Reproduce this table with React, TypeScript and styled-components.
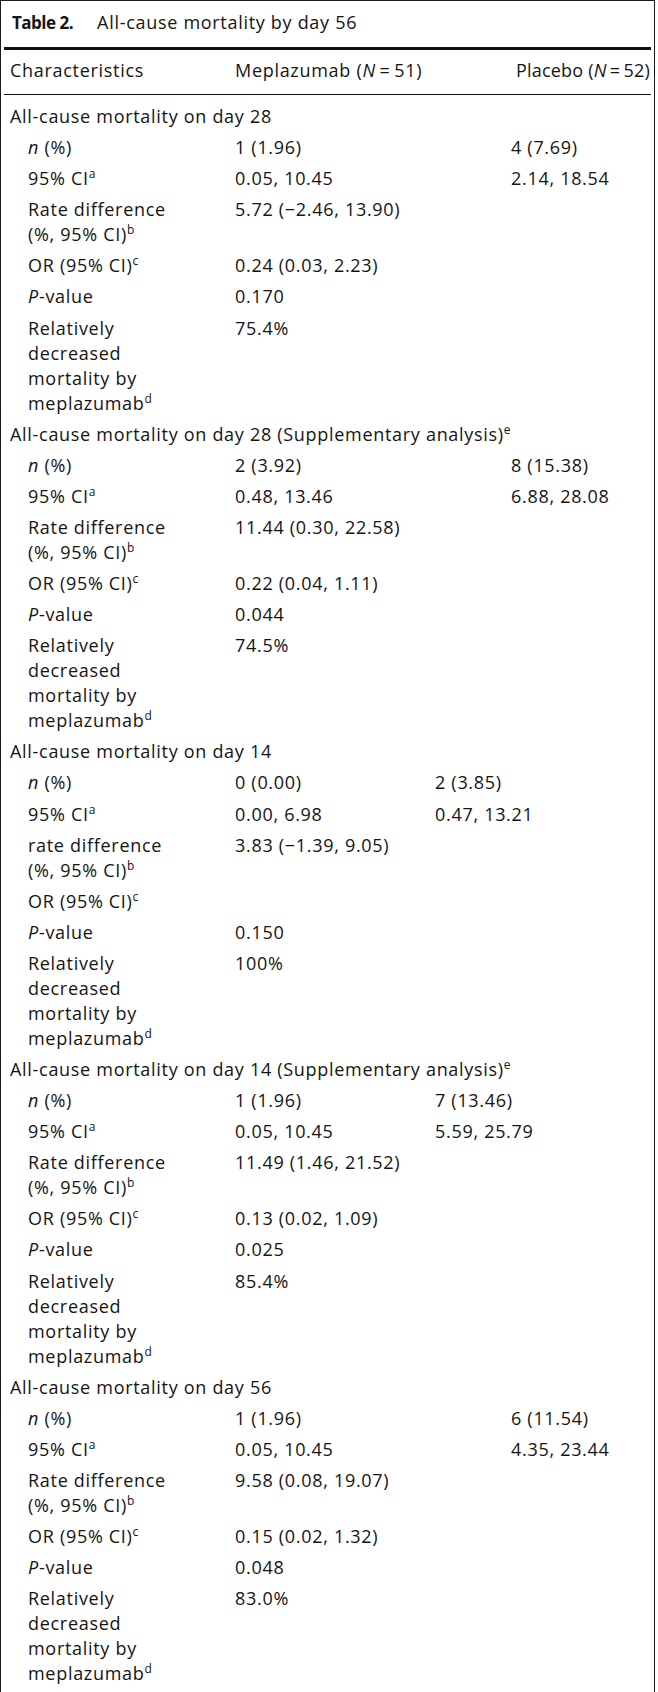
import React from "react";
import styled, { createGlobalStyle } from "styled-components";

const Global = createGlobalStyle`
  html, body { margin: 0; padding: 0; background: #fff; }
  body { font-family: "Open Sans", "Noto Sans", sans-serif; color: #141414; }
`;

const Frame = styled.div`
  box-sizing: border-box;
  width: 655px;
  border: 1px solid #1a1a1a;
  border-bottom: none;
  min-height: 1692px;
  font-size: 18px;
  line-height: 25px;
  letter-spacing: 0.7px;
`;

const Caption = styled.div`
  display: flex;
  align-items: baseline;
  gap: 24px;
  padding: 9px 0 12px 11px;
`;

const CaptionLabel = styled.span`
  font-weight: 700;
  font-size: 17px;
  letter-spacing: -0.5px;
`;

const Rule = styled.div<{ $thick?: boolean }>`
  margin: 0 3px;
  height: ${(p) => (p.$thick ? 3 : 1)}px;
  background: #111;
`;

const HeadRow = styled.div`
  display: flex;
  padding: 8px 0 11px 9px;
`;

const HeadCell = styled.div<{ $w?: number; $tight?: boolean }>`
  flex: 0 0 ${(p) => (p.$w ? `${p.$w}px` : "auto")};
  white-space: nowrap;
  ${(p) => (p.$tight ? "letter-spacing: 0.2px;" : "")}
`;

const Body = styled.div`
  padding-top: 6px;
`;

const SectionTitle = styled.div`
  padding: 3px 0 3.1px 9px;
  white-space: nowrap;
`;

const Row = styled.div`
  display: flex;
  align-items: flex-start;
  padding: 3px 0 3.1px;
`;

const Label = styled.div`
  box-sizing: border-box;
  flex: 0 0 234px;
  padding: 0 57px 0 27px;
`;

const Value = styled.div<{ $w: number }>`
  flex: 0 0 ${(p) => p.$w}px;
  white-space: nowrap;
`;

const Sup = styled.sup`
  font-size: 12px;
  line-height: 0;
  vertical-align: 7px;
  letter-spacing: 0;
`;

const I = styled.i`
  font-style: italic;
`;

type RowData = { label: React.ReactNode; a: string; b?: string };
type Section = { title: string; sup?: string; narrow?: boolean; rows: RowData[] };

const nLabel = (
  <>
    <I>n</I> (%)
  </>
);
const ciLabel = (
  <>
    95% CI<Sup>a</Sup>
  </>
);
const rdLabel = (lower?: boolean) => (
  <>
    {lower ? "rate" : "Rate"} difference (%, 95% CI)<Sup>b</Sup>
  </>
);
const orLabel = (
  <>
    OR (95% CI)<Sup>c</Sup>
  </>
);
const pLabel = (
  <>
    <I>P</I>-value
  </>
);
const relLabel = (
  <>
    Relatively decreased mortality by meplazumab<Sup>d</Sup>
  </>
);

const make = (
  v: [string, string, string, string, string, string, string, string],
  lower?: boolean
): RowData[] => [
  { label: nLabel, a: v[0], b: v[1] },
  { label: ciLabel, a: v[2], b: v[3] },
  { label: rdLabel(lower), a: v[4] },
  { label: orLabel, a: v[5] },
  { label: pLabel, a: v[6] },
  { label: relLabel, a: v[7] },
];

const sections: Section[] = [
  {
    title: "All-cause mortality on day 28",
    rows: make(["1 (1.96)", "4 (7.69)", "0.05, 10.45", "2.14, 18.54", "5.72 (\u22122.46, 13.90)", "0.24 (0.03, 2.23)", "0.170", "75.4%"]),
  },
  {
    title: "All-cause mortality on day 28 (Supplementary analysis)",
    sup: "e",
    rows: make(["2 (3.92)", "8 (15.38)", "0.48, 13.46", "6.88, 28.08", "11.44 (0.30, 22.58)", "0.22 (0.04, 1.11)", "0.044", "74.5%"]),
  },
  {
    title: "All-cause mortality on day 14",
    narrow: true,
    rows: make(["0 (0.00)", "2 (3.85)", "0.00, 6.98", "0.47, 13.21", "3.83 (\u22121.39, 9.05)", "", "0.150", "100%"], true),
  },
  {
    title: "All-cause mortality on day 14 (Supplementary analysis)",
    sup: "e",
    narrow: true,
    rows: make(["1 (1.96)", "7 (13.46)", "0.05, 10.45", "5.59, 25.79", "11.49 (1.46, 21.52)", "0.13 (0.02, 1.09)", "0.025", "85.4%"]),
  },
  {
    title: "All-cause mortality on day 56",
    rows: make(["1 (1.96)", "6 (11.54)", "0.05, 10.45", "4.35, 23.44", "9.58 (0.08, 19.07)", "0.15 (0.02, 1.32)", "0.048", "83.0%"]),
  },
];

export default function App() {
  return (
    <>
      <Global />
      <Frame>
        <Caption>
          <CaptionLabel>Table 2.</CaptionLabel>
          <span>All-cause mortality by day 56</span>
        </Caption>
        <Rule $thick />
        <HeadRow>
          <HeadCell $w={225}>Characteristics</HeadCell>
          <HeadCell $w={281}>
            Meplazumab (<I>N</I>{"\u2009=\u2009"}51)
          </HeadCell>
          <HeadCell $tight>
            Placebo (<I>N</I>{"\u2009=\u2009"}52)
          </HeadCell>
        </HeadRow>
        <Rule />
        <Body>
          {sections.map((s, i) => (
            <React.Fragment key={i}>
              <SectionTitle>
                {s.title}
                {s.sup && <Sup>{s.sup}</Sup>}
              </SectionTitle>
              {s.rows.map((r, j) => (
                <Row key={j}>
                  <Label>{r.label}</Label>
                  <Value $w={s.narrow ? 200 : 276}>{r.a}</Value>
                  {r.b && <Value $w={140}>{r.b}</Value>}
                </Row>
              ))}
            </React.Fragment>
          ))}
        </Body>
      </Frame>
    </>
  );
}
